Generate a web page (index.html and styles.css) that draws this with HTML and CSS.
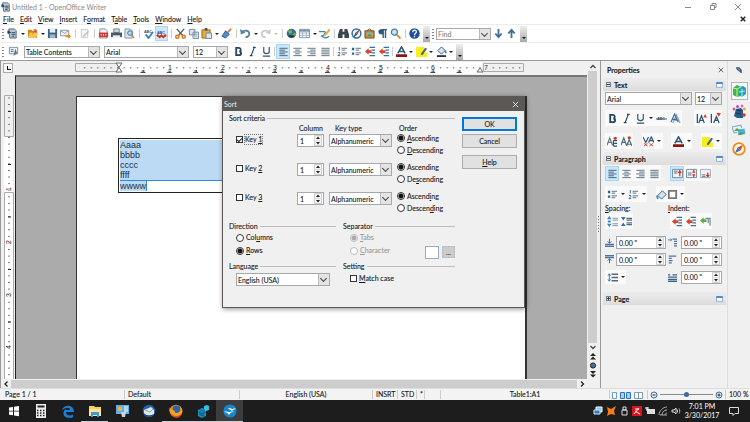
FILE: index.html
```html
<!DOCTYPE html>
<html lang="en">
<head>
<meta charset="utf-8">
<title>Untitled 1 - OpenOffice Writer</title>
<link rel="stylesheet" href="styles.css">
</head>
<body>
<svg class="defs" aria-hidden="true">
  <symbol id="doc" viewBox="0 0 12 12"><path d="M2 1h6l2 2v8H3z" fill="#b9c8d4" stroke="#4d6577"/><path d="M1 3l3 2-3 1zM5 5h4M5 7h4M5 9h3" stroke="#24475e" fill="#24475e"/></symbol>
  <symbol id="open" viewBox="0 0 12 12"><path d="M1 2h4l1 1h5v8H1z" fill="#c98a1b"/><path d="M1 11l2-6h9l-2 6z" fill="#f8c34c"/><path d="M6 6l4-4M7 2h3v3" stroke="#d5431c" fill="none"/></symbol>
  <symbol id="save" viewBox="0 0 12 12"><path d="M1 1h10v10H1z" fill="#3d6480"/><path d="M3 1h6v4H3z" fill="#e8eff4"/><path d="M3 7h6v4H3z" fill="#9fb6c6"/></symbol>
  <symbol id="mail" viewBox="0 0 12 12"><path d="M0.5 2.5h9v6h-9z" fill="#f3f5f7" stroke="#8193a0"/><path d="M1 3l4 3 4-3" fill="none" stroke="#8193a0"/><path d="M6 8h3V6l3 3-3 3v-2H6z" fill="#e98b1c"/></symbol>
  <symbol id="edit" viewBox="0 0 12 12"><path d="M2.5 1.500h7v9h-7z" fill="#f4f4f4" stroke="#c8c8c8"/><path d="M4 9l6-6 1 1-6 6z" fill="#bdbdbd"/></symbol>
  <symbol id="pdf" viewBox="0 0 12 12"><path d="M2 1h6l2 2v8H2z" fill="#e8edf0" stroke="#8494a0"/><path d="M1 5h10v5H1z" fill="#d6322c"/><path d="M3 7.500h1M5.500 7.500h1M8 7.500h1" stroke="#fff" stroke-width="2"/></symbol>
  <symbol id="print" viewBox="0 0 12 12"><path d="M3 1h6v4H3z" fill="#c9d6df" stroke="#6b7f8d"/><path d="M0 5h12v5H0z" fill="#4a5961"/><path d="M2 8h8v3H2z" fill="#eee"/></symbol>
  <symbol id="preview" viewBox="0 0 12 12"><path d="M1 1h6l2 2v8H1z" fill="#dbe5ed" stroke="#7c93a5"/><circle cx="6.500" cy="5.500" r="2.500" fill="#b9dcf6" stroke="#2d6a9c"/><path d="M8 7l3 4" stroke="#c9812a" stroke-width="1.500"/></symbol>
  <symbol id="check" viewBox="0 0 12 12"><path d="M3 7l3 4 5-7" fill="none" stroke="#3b84bd" stroke-width="2"/></symbol>
  <symbol id="auto" viewBox="0 0 12 12"><path d="M1 9l1-1 2 2 2-2 2 2 2-2 1 1" fill="none" stroke="#d92b22" stroke-width="2"/></symbol>
  <symbol id="cut" viewBox="0 0 12 12"><path d="M2 1l7 8M10 1L3 9" stroke="#51606b" stroke-width="1.500"/><circle cx="2.500" cy="9.500" r="1.700" fill="none" stroke="#e0781f" stroke-width="1.600"/><circle cx="9.500" cy="9.500" r="1.700" fill="none" stroke="#e0781f" stroke-width="1.600"/></symbol>
  <symbol id="copy" viewBox="0 0 12 12"><path d="M1.500 1.500h6v6h-6zM5.500 4.500h6v7h-6z" fill="#dce6ed" stroke="#6f8798"/><path d="M7 7h3M7 9h3" stroke="#8ca2b1"/></symbol>
  <symbol id="paste" viewBox="0 0 12 12"><path d="M1 2h9v9H1z" fill="#eaa934" stroke="#8b6a2c"/><path d="M4 0h3v3H4z" fill="#4c5c67"/><path d="M5.500 5.500h6v6h-6z" fill="#dbe6ee" stroke="#6f8798"/></symbol>
  <symbol id="brush" viewBox="0 0 12 12"><path d="M11 1L7 5" stroke="#e0781f" stroke-width="2"/><path d="M5 3l4 4-4 4-4-2z" fill="#4f8fca" stroke="#2b5f90"/></symbol>
  <symbol id="undo" viewBox="0 0 12 12"><path d="M2 5c2-3 9-3 8 2-.5 2-2 3-4 3" fill="none" stroke="currentColor" stroke-width="2"/><path d="M0 1l1 6 5-2z" fill="currentColor"/></symbol>
  <symbol id="globe" viewBox="0 0 12 12"><circle cx="6" cy="6" r="5.200" fill="#2f6f9f"/><path d="M2 3l4-1 1 3-3 2zM7 7l3-2 1 2-3 3z" fill="#76b33c"/><path d="M3 9h6" stroke="#333" stroke-width="2"/></symbol>
  <symbol id="table" viewBox="0 0 12 12"><path d="M.5 1.500h11v9H.5z" fill="#fff" stroke="#7690a2"/><path d="M1 3h10" stroke="#7690a2" stroke-width="2"/><path d="M1 5.500h10M1 8h10M4 2v8M8 2v8" stroke="#9fb2c0"/></symbol>
  <symbol id="draw" viewBox="0 0 12 12"><path d="M0 4h6c2 0 0 4-3 5 3 2 6 2 8 0" fill="none" stroke="#3b84bd" stroke-width="1.500"/><path d="M5 8l5-6 2 1-5 6z" fill="#f3ad2f"/><path d="M10 2l1-1 1 2z" fill="#d33"/></symbol>
  <symbol id="find" viewBox="0 0 12 12"><path d="M2 1h3v3h2V1h3l2 6v4H7V7H5v4H0V7z" fill="#3c4650"/></symbol>
  <symbol id="compass" viewBox="0 0 12 12"><circle cx="6" cy="6" r="4.800" fill="#f3f7fa" stroke="#2f6f9f" stroke-width="1.600"/><path d="M10 1L7 7 5 5z" fill="#e0401f"/><path d="M2 11l3-6 2 2z" fill="#2c5f8a"/></symbol>
  <symbol id="gallery" viewBox="0 0 12 12"><path d="M1 3h10v8H1z" fill="#cf8a35" stroke="#70502a"/><path d="M3 5h6v4H3z" fill="#6db6dc"/><path d="M3 9l3-3 3 3z" fill="#5a9a35"/><path d="M3 3l3-2 3 2" fill="none" stroke="#555"/></symbol>
  <symbol id="pilcrow" viewBox="0 0 12 12"><path d="M6 1h5v1.500h-1V11H8.500V2.500h-1V11H6V7C0 7 0 1 6 1z" fill="#2c5878"/></symbol>
  <symbol id="zoom" viewBox="0 0 12 12"><circle cx="4.800" cy="4.500" r="3.300" fill="#c9e4f7" stroke="#4a7da6" stroke-width="1.300"/><path d="M7.500 7.500l4 4" stroke="#d9882a" stroke-width="2"/></symbol>
  <symbol id="help" viewBox="0 0 12 12"><circle cx="6" cy="6" r="5.700" fill="#1f4f9c"/><path d="M4 4.500c0-3 4.500-2.500 4 0C7.700 6 6 6 6 7.500M6 8.500v1.500" fill="none" stroke="#fff" stroke-width="1.400"/></symbol>
  <symbol id="down" viewBox="0 0 12 12"><path d="M6 1v8M2.500 6L6 10l3.500-4" fill="none" stroke="#3f6f9a" stroke-width="2"/></symbol>
  <symbol id="up" viewBox="0 0 12 12"><path d="M6 11V3M2.500 6L6 2l3.500 4" fill="none" stroke="#3f6f9a" stroke-width="2"/></symbol>
  <symbol id="styles" viewBox="0 0 12 12"><path d="M1.500 1.500h9v7h-9z" fill="#eef2f5" stroke="#788b99"/><path d="M3 4h3M3 6h3" stroke="#567"/><path d="M8 3l-2 8 4-3z" fill="#5f7484"/></symbol>
  <symbol id="bold" viewBox="0 0 12 12"><path d="M3.500 2v8h3c3 0 3-3.800.5-4 2-.4 2-4-.5-4z" fill="none" stroke="#22475e" stroke-width="2"/></symbol>
  <symbol id="italic" viewBox="0 0 12 12"><path d="M8 1.500L4.500 10.500M6.500 1.500h3M3 10.500h3" stroke="#22475e" stroke-width="1.300"/></symbol>
  <symbol id="under" viewBox="0 0 12 12"><path d="M3 1v5c0 3 6 3 6 0V1M2 11h8" fill="none" stroke="#35566b" stroke-width="1.300"/></symbol>
  <symbol id="left" viewBox="0 0 12 12"><path d="M1.500 2.500h9M1.500 4.500h6M1.500 6.500h9M1.500 8.500h6M1.500 10.500h9" stroke="#445e70"/></symbol>
  <symbol id="center" viewBox="0 0 12 12"><path d="M1.500 2.500h9M3.500 4.500h5M1.500 6.500h9M3.500 8.500h5M1.500 10.500h9" stroke="#536a79"/></symbol>
  <symbol id="right" viewBox="0 0 12 12"><path d="M1.500 2.500h9M4.500 4.500h6M1.500 6.500h9M4.500 8.500h6M1.500 10.500h9" stroke="#536a79"/></symbol>
  <symbol id="just" viewBox="0 0 12 12"><path d="M1.500 2.500h9M1.500 4.500h9M1.500 6.500h9M1.500 8.500h9M1.500 10.500h9" stroke="#536a79"/></symbol>
  <symbol id="nums" viewBox="0 0 12 12"><path d="M2.500 1v4M1 7h2v1.500L1 10.500h2.500" fill="none" stroke="#2f6289"/><path d="M5 2.500h6M5 4.500h4M5 7.500h6M5 9.500h4" stroke="#536a79"/></symbol>
  <symbol id="bullets" viewBox="0 0 12 12"><path d="M1 2h2.500v2.500H1zM1 7h2.500v2.500H1z" fill="#2f6289"/><path d="M5 2.500h6M5 4.500h4M5 7.500h6M5 9.500h4" stroke="#536a79"/></symbol>
  <symbol id="lines" viewBox="0 0 12 12"><path d="M2.500 2v8M1 4l1.500-2L4 4M1 8l1.500 2L4 8" fill="none" stroke="#2f6fa5"/><path d="M5 2.500h7M5 6h7M5 9.500h7" stroke="#536a79" stroke-width="1.500"/></symbol>
  <symbol id="indent" viewBox="0 0 12 12"><path d="M5 1.500h6M7 4.500h4M7 7.500h4M5 10.500h6" stroke="#3f6f96" stroke-width="1.300"/><path d="M0 6l4-3.500v2h3v3H4v2z" fill="#d8452a"/></symbol>
  <symbol id="indentg" viewBox="0 0 12 12"><path d="M6 2.500h5v8M9 3v5" fill="none" stroke="#6f8798" stroke-width="1.300"/><path d="M0 5l4-3.500v2h3v3H4v2z" fill="#62a83a"/></symbol>
  <symbol id="acolor" viewBox="0 0 12 12"><path d="M2 8L6 1l4 7M3.500 6h5" fill="none" stroke="#2b5673" stroke-width="1.700"/><path d="M0 9h12v3H0z" fill="#8d1414"/></symbol>
  <symbol id="hilite" viewBox="0 0 12 12"><path d="M0 7h12v5H0zM0 1h9v6H0z" fill="#f7ee1f"/><path d="M5 9l5-7 2 1-5 7z" fill="#4d6475"/></symbol>
  <symbol id="fill" viewBox="0 0 12 12"><path d="M2 5l4-4 4 4-4 4z" fill="#d6e4ee" stroke="#365b74"/><path d="M10 5l1 3" stroke="#3f8ac4" stroke-width="2"/><path d="M1 10h10v2H1z" fill="#26343d"/></symbol>
  <symbol id="bucket" viewBox="0 0 12 12"><path d="M2 7l5-5 4 4-5 5z" fill="#d6e4ee" stroke="#365b74"/><path d="M1 7l1 4" stroke="#3f8ac4" stroke-width="2"/></symbol>
  <symbol id="strike" viewBox="0 0 12 12"><path d="M0 6.500h12" stroke="#35566b"/></symbol>
  <symbol id="shadow" viewBox="0 0 12 12"><path d="M3 11L7 2l4 9M5 8h4" fill="none" stroke="#93a9b8" stroke-width="1.500"/><path d="M1 10L5 1l4 9M3 7h4" fill="none" stroke="#39749d" stroke-width="1.300"/></symbol>
  <symbol id="grow" viewBox="0 0 12 12"><path d="M1.500 1v10M3 11l3-8 3 8M4 8h4" fill="none" stroke="#2b5673" stroke-width="1.400"/><path d="M8 5l2-4 2 4z" fill="#d33f2a"/></symbol>
  <symbol id="shrink" viewBox="0 0 12 12"><path d="M1.500 1v10M4 11l3-7 3 7M5 8h4" fill="none" stroke="#2b5673" stroke-width="1.400"/><path d="M7 0h5L9.500 4z" fill="#d33f2a"/></symbol>
  <symbol id="asub" viewBox="0 0 12 12"><path d="M0 10l3-8 3 8M1 7h4" fill="none" stroke="#64798a" stroke-width="1.300"/><path d="M7 5h4M7 8h4M7 11h4M7 5v6" fill="none" stroke="#2b5673" stroke-width="1.300"/><circle cx="9" cy="2.500" r="1.800" fill="#d33f2a"/></symbol>
  <symbol id="asup" viewBox="0 0 12 12"><path d="M0 10l3-8 3 8M1 7h4M6 11l3-7 3 7M7 9h4" fill="none" stroke="#4b6b80" stroke-width="1.300"/><circle cx="9" cy="2" r="1.800" fill="#d33f2a"/></symbol>
  <symbol id="spacing" viewBox="0 0 12 12"><path d="M0 1l3 6 3-6M6 7l3-6 3 6M7 5h4" fill="none" stroke="#2b5673" stroke-width="1.300"/><path d="M1 8l4 3M5 8l-4 3M7 8l4 3M11 8l-4 3" fill="none" stroke="#d33f2a"/></symbol>
  <symbol id="vt" viewBox="0 0 12 12"><path d="M.5 1.500h11v9H.5z" fill="#eef3f7" stroke="#6f8798"/><path d="M2 3.500h4M2 5.500h4" stroke="#536a79"/><path d="M8.500 9V4M7 5.500L8.500 3 10 5.500" stroke="#d8321f" fill="none" stroke-width="1.300"/></symbol>
  <symbol id="vm" viewBox="0 0 12 12"><path d="M.5 1.500h11v9H.5z" fill="#eef3f7" stroke="#6f8798"/><path d="M2 5.500h4M2 7.500h4" stroke="#536a79"/><path d="M8.500 2v3M8.500 7v3M7 4.500h3M7 7.500h3" stroke="#d8321f" stroke-width="1.300"/></symbol>
  <symbol id="vb" viewBox="0 0 12 12"><path d="M.5 1.500h11v9H.5z" fill="#eef3f7" stroke="#9caab4"/><path d="M2 7.500h4M2 9.500h4" stroke="#536a79"/><path d="M8.500 5v4M7 7.500L8.500 9.500 10 7.500" stroke="#d8321f" fill="none" stroke-width="1.300"/></symbol>
  <symbol id="box" viewBox="0 0 12 12"><path d="M2 2h8v8H2z" fill="#fff" stroke="#777" stroke-width="2"/></symbol>
  <symbol id="psp" viewBox="0 0 12 12"><path d="M0 3.500h5L2.500 0zM0 8.500h5L2.500 12zM1 5h3v2H1z" fill="#3b84bd"/><path d="M6 2.500h6M6 4.500h6M6 8.500h6M6 10.500h6" stroke="#7a8c99"/></symbol>
  <symbol id="psd" viewBox="0 0 12 12"><path d="M0 1h5L2.500 5zM0 11h5L2.500 7z" fill="#2f6fa5"/><path d="M6 2.500h6M6 4.500h6M6 7.500h6M6 9.500h6" stroke="#536a79" stroke-width="1.300"/></symbol>
  <symbol id="above" viewBox="0 0 12 12"><path d="M0 8.500h12M0 11h12" stroke="#4f7396" stroke-width="1.700"/><path d="M6 1v6M3.500 4.500L6 7l2.500-2.500" fill="none" stroke="#2f6fa5" stroke-width="1.300"/></symbol>
  <symbol id="below" viewBox="0 0 12 12"><path d="M0 1h12M0 3.500h12" stroke="#4f7396" stroke-width="1.700"/><path d="M6 11V5M3.500 7.500L6 5l2.500 2.500" fill="none" stroke="#2f6fa5" stroke-width="1.300"/></symbol>
  <symbol id="before" viewBox="0 0 12 12"><path d="M6 1.500h6M8 4.500h4M8 7.500h4M8 10.500h4" stroke="#4f7396" stroke-width="1.700"/><path d="M0 2.500h5M3 1l2 1.500L3 4" fill="none" stroke="#2f6fa5"/></symbol>
  <symbol id="after" viewBox="0 0 12 12"><path d="M1 1.500h10M1 4.500h4M1 7.500h5M1 10.500h4" stroke="#4f7396" stroke-width="1.700"/></symbol>
  <symbol id="first" viewBox="0 0 12 12"><path d="M0 2.500h3M6 2.500h6M0 5.500h12M0 8.500h12M0 11h12" stroke="#3f6484" stroke-width="1.700"/></symbol>
  <symbol id="more" viewBox="0 0 9 7"><path d="M.5.500h8v6h-8z" fill="#fff" stroke="#6c9bd8"/><path d="M.5 1h8" stroke="#3c74c4" stroke-width="2"/></symbol>
  <symbol id="x" viewBox="0 0 8 8"><path d="M1 1l6 6M7 1L1 7" stroke="currentColor"/></symbol>
  <symbol id="spin" viewBox="0 0 8 11"><path d="M.5.500h7v10h-7z" fill="#f4f4f4" stroke="#cfcfcf"/><path d="M0 5.500h8" stroke="#ddd"/><path d="M2 4l2-2.500L6 4zM2 7l2 2.500L6 7z" fill="#222"/></symbol>
</svg>

<header class="titlebar">
  <svg class="i"><use href="#doc"/></svg><h1>Untitled 1 - OpenOffice Writer</h1>
  <div class="winbtns">
    <button aria-label="Minimize"><svg viewBox="0 0 8 8"><path d="M1 4.500h6" stroke="#888"/></svg></button>
    <button aria-label="Restore"><svg viewBox="0 0 8 8"><path d="M1.500 2.500h4v4h-4zM3 2V.5h4v4H6" fill="none" stroke="#888"/></svg></button>
    <button aria-label="Close"><svg class="gray"><use href="#x"/></svg></button>
  </div>
</header>
<nav class="menubar">
  <a href="#"><u>F</u>ile</a><a href="#"><u>E</u>dit</a><a href="#"><u>V</u>iew</a><a href="#"><u>I</u>nsert</a><a href="#">F<u>o</u>rmat</a><a href="#">T<u>a</u>ble</a><a href="#"><u>T</u>ools</a><a href="#"><u>W</u>indow</a><a href="#"><u>H</u>elp</a>
  <button class="closedoc" aria-label="Close document"><svg><use href="#x"/></svg></button>
</nav>
<div class="toolbar">
  <i class="grip"></i>
  <button aria-label="New"><svg class="i"><use href="#doc"/></svg></button><i class="dd"></i>
  <button aria-label="Open"><svg class="i"><use href="#open"/></svg></button><i class="dd"></i>
  <button aria-label="Save"><svg class="i"><use href="#save"/></svg></button>
  <button aria-label="E-mail"><svg class="i"><use href="#mail"/></svg></button><i class="sep"></i>
  <button aria-label="Edit file"><svg class="i"><use href="#edit"/></svg></button><i class="sep"></i>
  <button aria-label="PDF"><svg class="i"><use href="#pdf"/></svg></button>
  <button aria-label="Print"><svg class="i"><use href="#print"/></svg></button>
  <button aria-label="Preview"><svg class="i"><use href="#preview"/></svg></button><i class="sep"></i>
  <button aria-label="Spelling"><svg class="i" viewBox="0 0 12 12"><use href="#check"/><text x="1" y="5" class="tiny">ABC</text></svg></button>
  <button class="on" aria-label="AutoSpellcheck"><svg class="i" viewBox="0 0 12 12"><use href="#auto"/><text x="1" y="6" class="tiny">ABC</text></svg></button><i class="sep"></i>
  <button aria-label="Cut"><svg class="i"><use href="#cut"/></svg></button>
  <button aria-label="Copy"><svg class="i"><use href="#copy"/></svg></button>
  <button aria-label="Paste"><svg class="i"><use href="#paste"/></svg></button><i class="dd"></i>
  <button aria-label="Format paintbrush"><svg class="i"><use href="#brush"/></svg></button><i class="sep"></i>
  <button aria-label="Undo"><svg class="i undo"><use href="#undo"/></svg></button><i class="dd"></i>
  <button aria-label="Redo"><svg class="i redo"><use href="#undo"/></svg></button><i class="dd off"></i><i class="sep"></i>
  <button aria-label="Hyperlink"><svg class="i"><use href="#globe"/></svg></button>
  <button aria-label="Table"><svg class="i"><use href="#table"/></svg></button><i class="dd"></i>
  <button aria-label="Draw"><svg class="i"><use href="#draw"/></svg></button><i class="sep"></i>
  <button aria-label="Find and replace"><svg class="i"><use href="#find"/></svg></button>
  <button aria-label="Navigator"><svg class="i"><use href="#compass"/></svg></button>
  <button aria-label="Gallery"><svg class="i"><use href="#gallery"/></svg></button>
  <button aria-label="Nonprinting characters"><svg class="i"><use href="#pilcrow"/></svg></button>
  <button aria-label="Zoom"><svg class="i"><use href="#zoom"/></svg></button><i class="sep"></i>
  <button aria-label="Help"><svg class="i"><use href="#help"/></svg></button>
  <i class="handle"></i><i class="grip"></i>
  <span class="combo findbox"><input type="text" placeholder="Find" aria-label="Find"></span>
  <button aria-label="Find next"><svg class="i"><use href="#down"/></svg></button>
  <button aria-label="Find previous"><svg class="i"><use href="#up"/></svg></button>
  <i class="handle"></i>
</div>
<div class="toolbar format">
  <i class="grip"></i>
  <button aria-label="Styles"><svg class="i"><use href="#styles"/></svg></button>
  <span class="combo style"><select aria-label="Apply style"><option>Table Contents</option></select></span>
  <span class="combo font"><select aria-label="Font name"><option>Arial</option></select></span>
  <span class="combo size"><select aria-label="Font size"><option>12</option></select></span>
  <button aria-label="Bold"><svg class="i"><use href="#bold"/></svg></button>
  <button aria-label="Italic"><svg class="i"><use href="#italic"/></svg></button>
  <button aria-label="Underline"><svg class="i"><use href="#under"/></svg></button><i class="sep"></i>
  <button class="on" aria-label="Left"><svg class="i"><use href="#left"/></svg></button>
  <button aria-label="Centered"><svg class="i"><use href="#center"/></svg></button>
  <button aria-label="Right"><svg class="i"><use href="#right"/></svg></button>
  <button aria-label="Justified"><svg class="i"><use href="#just"/></svg></button><i class="sep"></i>
  <button aria-label="Numbering"><svg class="i"><use href="#nums"/></svg></button>
  <button aria-label="Bullets"><svg class="i"><use href="#bullets"/></svg></button>
  <button aria-label="Decrease indent"><svg class="i"><use href="#indent"/></svg></button>
  <button aria-label="Increase indent"><svg class="i"><use href="#indent"/></svg></button><i class="sep"></i>
  <button aria-label="Font color"><svg class="i"><use href="#acolor"/></svg></button><i class="dd"></i>
  <button aria-label="Highlighting"><svg class="i"><use href="#hilite"/></svg></button><i class="dd"></i>
  <button aria-label="Background color"><svg class="i"><use href="#fill"/></svg></button><i class="dd"></i>
  <i class="handle"></i>
</div>

<main class="workspace">
  <section class="editor">
    <div class="view">
      <div class="sheetarea">
        <div class="hruler">
          <span class="corner"></span>
          <svg viewBox="0 0 571 14" width="571" height="14">
            <defs><pattern id="dots" width="6.590" height="14" patternUnits="userSpaceOnUse" x="102"><path d="M0 6h1.200v1.400H0z" fill="#777"/></pattern>
            <pattern id="tabs" width="26.350" height="14" patternUnits="userSpaceOnUse" x="102"><path d="M23.500 11.500h4M25.500 9v3M0 11.500h2M.5 9v3" stroke="#444"/></pattern></defs>
            <path d="M104 1h363v12H104z" fill="#fff"/>
            <path d="M60.500 2.500h43v8h-43zM468.500 2.500h40v8h-40z" fill="#f0f0f0" stroke="#aaa"/>
            <path d="M64 0h442v14H64z" fill="url(#dots)"/><path d="M115 0h350v14H115z" fill="url(#tabs)"/>
            <path d="M101 2h6l-3 4.500zM104 6.500l3 4.500h-6zM462 11l3-4 3 4z" fill="#fff" stroke="#666"/>
            <g class="nums"><text x="155" y="9">1</text><text x="208" y="9">2</text><text x="260" y="9">3</text><text x="313" y="9">4</text><text x="366" y="9">5</text><text x="418" y="9">6</text><text x="471" y="9">7</text></g>
          </svg>
        </div>
        <div class="docrow">
          <div class="vruler">
            <svg viewBox="0 0 15 304" width="15" height="304">
              <defs><pattern id="vdots" width="15" height="6.590" patternUnits="userSpaceOnUse" y="62"><path d="M7 0h2v1H7z" fill="#777"/></pattern></defs>
              <path d="M3 62h9v55H3z" fill="#fff"/>
              <path d="M3.500 20.500h9v41h-9z" fill="#f0f0f0" stroke="#aaa"/><path d="M3.500 117.500h9v190h-9z" fill="#fff" stroke="#aaa"/>
              <path d="M4 22h8v282H4z" fill="url(#vdots)"/><path d="M7 36.500h3M7 89.500h3M7 142h3M7 194.500h3M7 247h3" stroke="#222"/>
              <g class="nums"><text transform="translate(10 116) rotate(-90)" x="0" y="0">1</text><text transform="translate(10 169) rotate(-90)" x="0" y="0">2</text><text transform="translate(10 222) rotate(-90)" x="0" y="0">3</text><text transform="translate(10 274) rotate(-90)" x="0" y="0">4</text></g>
            </svg>
          </div>
          <div class="canvas"><article class="page">
            <table class="doctable"><tbody><tr><td><p>Aaaa</p><p>bbbb</p><p>cccc</p><p>ffff</p><p class="last"><mark>wwww</mark></p></td></tr></tbody></table>
          </article></div>
        </div>
      </div>
      <div class="vscroll">
        <svg viewBox="0 0 10 8"><path d="M2.500 5.500L5 3l2.500 2.500" fill="none" stroke="#444" stroke-width="1.300"/></svg>
        <span class="thumb"></span>
        <svg viewBox="0 0 10 8"><path d="M2.500 2.500L5 5l2.500-2.500" fill="none" stroke="#444" stroke-width="1.300"/></svg>
        <svg viewBox="0 0 10 9"><path d="M2 4l3-3 3 3zM2 7.500l3-3 3 3z" fill="#222"/></svg>
        <svg viewBox="0 0 10 9"><circle cx="5" cy="4.500" r="2.600" fill="#4a6f94" stroke="#223"/></svg>
        <svg viewBox="0 0 10 9"><path d="M2 1l3 3 3-3zM2 4.500l3 3 3-3z" fill="#222"/></svg>
      </div>
    </div>
    <div class="hscroll">
      <svg viewBox="0 0 10 8"><path d="M6.500 1.500L4 4l2.500 2.500" fill="none" stroke="#222" stroke-width="1.300"/></svg>
      <span class="thumb"></span>
      <svg viewBox="0 0 10 8"><path d="M4 1.500L6.500 4 4 6.500" fill="none" stroke="#222" stroke-width="1.300"/></svg>
    </div>
  </section>
  <div class="splitter"><i></i></div>
  <aside class="sidebar">
    <div class="panelhead"><h2>Properties</h2><button aria-label="Close sidebar"><svg class="xs"><use href="#x"/></svg></button></div>
    <div class="sechead"><i class="tw"></i><h3>Text</h3><button aria-label="Character options"><svg class="more"><use href="#more"/></svg></button></div>
    <div class="section">
      <div class="row"><span class="combo sfont"><select aria-label="Font"><option>Arial</option></select></span><span class="combo ssize"><select aria-label="Size"><option>12</option></select></span></div>
      <div class="row spread"><span class="grp"><button aria-label="Bold"><svg class="i"><use href="#bold"/></svg></button><button aria-label="Italic"><svg class="i"><use href="#italic"/></svg></button><button aria-label="Underline"><svg class="i"><use href="#under"/></svg></button><i class="dd"></i><button aria-label="Strikethrough"><svg class="i" viewBox="0 0 12 12"><text x="1" y="8" class="tiny">ABC</text><use href="#strike"/></svg></button><button aria-label="Shadow"><svg class="i"><use href="#shadow"/></svg></button></span><span class="grp"><button aria-label="Grow"><svg class="i"><use href="#grow"/></svg></button><button aria-label="Shrink"><svg class="i"><use href="#shrink"/></svg></button></span></div>
      <div class="row spread"><span class="grp"><button aria-label="Subscript"><svg class="i"><use href="#asub"/></svg></button><button aria-label="Superscript"><svg class="i"><use href="#asup"/></svg></button></span><span class="grp"><button aria-label="Character spacing"><svg class="i"><use href="#spacing"/></svg></button><i class="dd"></i></span><span class="grp"><button aria-label="Font color"><svg class="i"><use href="#acolor"/></svg></button><i class="dd"></i></span><span class="grp"><button aria-label="Highlighting"><svg class="i"><use href="#hilite"/></svg></button><i class="dd"></i></span></div>
    </div>
    <div class="sechead"><i class="tw"></i><h3>Paragraph</h3><button aria-label="Paragraph options"><svg class="more"><use href="#more"/></svg></button></div>
    <div class="section para">
      <div class="row two"><span class="grp"><button class="on" aria-label="Left"><svg class="i"><use href="#left"/></svg></button><button aria-label="Center"><svg class="i"><use href="#center"/></svg></button><button aria-label="Right"><svg class="i"><use href="#right"/></svg></button><button aria-label="Justify"><svg class="i"><use href="#just"/></svg></button></span><span class="grp"><button class="on" aria-label="Top"><svg class="i"><use href="#vt"/></svg></button><button aria-label="Middle"><svg class="i"><use href="#vm"/></svg></button><button aria-label="Bottom"><svg class="i"><use href="#vb"/></svg></button></span></div>
      <div class="row two lists"><span class="grp"><button aria-label="Bullets"><svg class="i"><use href="#bullets"/></svg></button><i class="dd"></i><button aria-label="Numbering"><svg class="i"><use href="#nums"/></svg></button><i class="dd"></i></span><span class="grp"><button aria-label="Fill"><svg class="i"><use href="#bucket"/></svg><svg class="i"><use href="#box"/></svg></button><i class="dd"></i></span></div>
      <div class="labels"><span><u>S</u>pacing:</span><span><u>I</u>ndent:</span></div>
      <div class="row two"><span class="grp"><button aria-label="Increase spacing"><svg class="i"><use href="#psp"/></svg></button><button aria-label="Decrease spacing"><svg class="i"><use href="#psd"/></svg></button></span><span class="grp"><button aria-label="Decrease indent"><svg class="i"><use href="#indent"/></svg></button><button aria-label="Increase indent"><svg class="i"><use href="#indent"/></svg></button><button aria-label="Hanging indent"><svg class="i"><use href="#indentg"/></svg></button></span></div>
      <div class="fields">
        <svg class="f"><use href="#above"/></svg><span class="spin"><input value='0.00 "' aria-label="Above paragraph spacing"><svg><use href="#spin"/></svg></span>
        <svg class="f"><use href="#before"/></svg><span class="spin"><input value='0.00 "' aria-label="Before text indent"><svg><use href="#spin"/></svg></span>
        <svg class="f"><use href="#below"/></svg><span class="spin"><input value='0.00 "' aria-label="Below paragraph spacing"><svg><use href="#spin"/></svg></span>
        <svg class="f"><use href="#after"/></svg><span class="spin"><input value='0.00 "' aria-label="After text indent"><svg><use href="#spin"/></svg></span>
        <span class="grp line"><button aria-label="Line spacing"><svg class="i"><use href="#lines"/></svg></button><i class="dd"></i></span>
        <svg class="f"><use href="#first"/></svg><span class="spin"><input value='0.00 "' aria-label="First line indent"><svg><use href="#spin"/></svg></span>
      </div>
    </div>
    <div class="sechead pagehead"><i class="tw plus"></i><h3>Page</h3><button aria-label="Page options"><svg class="more"><use href="#more"/></svg></button></div>
  </aside>
  <div class="decks">
    <button aria-label="Sidebar settings"><svg viewBox="0 0 14 14"><path d="M4 5h3l2 2v3M5 6l4 3" stroke="#3f5c78" fill="none" stroke-width="1.500"/></svg></button>
    <button class="cur" aria-label="Properties"><svg viewBox="0 0 14 14"><path d="M1 4l4-3 4 2v9l-4 1-4-2z" fill="#39b54a"/><path d="M7 3l4-1 3 2v6l-4 3-3-2z" fill="#1e9be0"/><path d="M1 4l4 1 4-2M5 5v8M7 8l6-1M10 5v8" stroke="#c9f1a6" fill="none"/></svg></button>
    <button aria-label="Styles"><svg viewBox="0 0 14 14"><path d="M4 5l5-1 2 2v8H5L2 12z" fill="#1f5c94"/><path d="M5 6l4 1M4 9l5 1" stroke="#3b2b24"/><circle cx="2" cy="5" r="1.500" fill="#e0569c"/><circle cx="5.500" cy="2.500" r="1.500" fill="#b153b8"/><circle cx="10" cy="2" r="1.500" fill="#e86ab0"/><circle cx="12.500" cy="5" r="1.400" fill="#f0a52b"/><circle cx="12" cy="11" r="1.700" fill="#d3332a"/></svg></button>
    <button aria-label="Gallery"><svg viewBox="0 0 14 14"><path d="M0 4l9-2 1 6-8 2z" fill="#e3f1f8" stroke="#7fa9c0"/><path d="M5 6l8-1 1 6-8 2z" fill="#59abd9" stroke="#e8f3f9"/><path d="M2 8l3-3 3 3z" fill="#58a93c"/><path d="M6 12l3-3 4 2z" fill="#4f9f37"/></svg></button>
    <button aria-label="Navigator"><svg viewBox="0 0 14 14"><circle cx="7" cy="7" r="5.800" fill="#fff7e8" stroke="#ee8b1c" stroke-width="1.800"/><path d="M11 3L8.500 8.500 5.500 5.500z" fill="#d9422a"/><path d="M3 11l2.500-5.500 3 3z" fill="#3f78b0"/></svg></button>
  </div>
</main>

<footer class="status">
  <span>Page 1 / 1</span><span>Default</span><span class="mid">English (USA)</span><span>INSRT</span><span>STD</span><span>*</span><span></span><span class="mid">Table1:A1</span>
  <span class="views"><svg viewBox="0 0 34 10"><path d="M2.500 2.500h4v6h-4z" fill="#fff" stroke="#6e9cc8"/><path d="M10.500 2.500h4v6h-4zM16.500 2.500h4v6h-4z" fill="#a9cff0" stroke="#2c74b9"/><path d="M24.500 2.500h4v6h-4zM28.500 2.500h4v6h-4z" fill="#fff" stroke="#7d9ab3"/></svg></span>
  <span class="zoomer"><svg class="z" viewBox="0 0 8 8"><circle cx="4" cy="4" r="3" fill="#e3eefa" stroke="#3d6c99"/><path d="M2.500 4h3" stroke="#234"/></svg><input type="range" min="0" max="100" value="50" aria-label="Zoom"><svg class="z" viewBox="0 0 8 8"><circle cx="4" cy="4" r="3" fill="#e3eefa" stroke="#3d6c99"/><path d="M2.500 4h3M4 2.500v3" stroke="#234"/></svg></span>
  <span>100 %</span>
</footer>

<nav class="taskbar">
  <button aria-label="Start"><svg viewBox="0 0 14 14"><path d="M2 3.500l4-.6v3.800H2zM7 2.700l5-.7v4.700H7zM2 7.500h4v3.800l-4-.6zM7 7.500h5v4.700l-5-.7z" fill="#fff"/></svg></button>
  <button aria-label="Calculator"><svg viewBox="0 0 14 14"><path d="M2 0h10v14H2z" fill="#eee"/><path d="M3.500 1.500h7v2h-7z" fill="#222"/><path d="M3 6.500h8M3 9h8M3 11.500h8" stroke="#222" stroke-width="1.500" stroke-dasharray="1.500 1.500"/></svg></button>
  <button aria-label="Edge"><svg viewBox="0 0 14 14"><path d="M1 6.500C2 0 13 0 13 8H5c0 4 4 4 7 2.500v2.700C6 15 2 12.500 2.500 8.500 3 6 5 5 5.500 4.800 4.800 5.500 5 6 5 6h4C9 3 4 3 1 6.500z" fill="#1783d8"/></svg></button>
  <button class="run" aria-label="File Explorer"><svg viewBox="0 0 14 14"><path d="M1 2h5l1 1h6v9H1z" fill="#f5cf63"/><path d="M1 5h12v7H1z" fill="#fbe59a"/><path d="M3 8h8v5H9v-2H5v2H3z" fill="#3a9bdc"/></svg></button>
  <button aria-label="Control Panel"><svg viewBox="0 0 14 14"><path d="M1 1h13v9H1z" fill="#5db0e8"/><circle cx="5" cy="5" r="2.300" fill="#f4b53b"/><path d="M9 3h4M9 5h4M9 7h4" stroke="#fff"/><path d="M6 8h5l-1 5H7z" fill="#c9d4dc"/></svg></button>
  <button aria-label="Thunderbird"><svg viewBox="0 0 14 14"><circle cx="7" cy="7" r="6.300" fill="#2660a8"/><path d="M2 6l7-3 3 3v4c-4 3-8 2-10-1z" fill="#dfe8f1"/><path d="M3 6l5 2 3-3" fill="none" stroke="#8aa"/><path d="M1 9c2 4 8 5 11 1-3 2-8 2-11-1z" fill="#16407c"/></svg></button>
  <button class="run" aria-label="Firefox"><svg viewBox="0 0 14 14"><circle cx="7" cy="7" r="6.300" fill="#f08a1d"/><circle cx="7.500" cy="5.500" r="3.900" fill="#2765b0"/><path d="M1 3c0 2 1 3 3 3l2 1c-1 2 2 3 4 1 2 0 2-4 1-5 3 2 3 6 1 8-3 3-8 2-10-1-2-2-2-5-1-7z" fill="#f6a21c"/><path d="M2 9c2 4 8 4 11 0-1 6-9 7-11 0z" fill="#db4a1b"/></svg></button>
  <button class="run" aria-label="Registry"><svg viewBox="0 0 14 14"><path d="M2 6l4-2 4 2v6l-4 2-4-2z" fill="#1d9fd0"/><path d="M8 2l3-1 2 1v4l-3 1-2-1z" fill="#35c0ea"/><path d="M2 8l4 2 4-2M6 5v9M3 10l7 3M4 5v7M8 5v7" stroke="#0a4866" fill="none" stroke-width=".7"/></svg></button>
  <button class="run active" aria-label="OpenOffice"><svg viewBox="0 0 14 14"><circle cx="7" cy="7" r="6.600" fill="#1785cc"/><path d="M5 5c2-2 3 0 4 0s2-1 4 0c-2 0-3 1-4 2-1-1-2-2-4-2zM1 8c2-1 4 0 5 0s3-1 5 0c-3 0-4 1-5 3-1-2-3-3-5-3z" fill="#fff"/></svg></button>
  <div class="tray">
    <svg viewBox="0 0 10 10"><path d="M3 1h6v5H3z" fill="#8cc4f0" stroke="#fff"/><path d="M1 4h6v4H1z" fill="#2f78c4" stroke="#d5e8f8"/></svg>
    <svg viewBox="0 0 10 10"><path d="M1 1l4 2 5-3-2 5 1 4-4-1-4 2 1-4z" fill="#f57d17"/></svg>
    <svg viewBox="0 0 10 10"><path d="M4 1h3v3H4zM3 4h5v5H3z" fill="none" stroke="#ddd"/></svg>
    <svg viewBox="0 0 10 10"><path d="M0 0h10v10H0z" fill="#d8151d"/><path d="M2 8l5-6M3 3h4M3 5l5 3" stroke="#fff"/></svg>
    <svg viewBox="0 0 10 10"><path d="M2 3h8v5H2z" fill="#ddd"/><path d="M0 2h4M1 4h3M2 1v3" stroke="#fff"/></svg>
    <svg viewBox="0 0 10 10"><path d="M1 9C1 5 5 1 9 1M4 9c0-3 2-5 5-5M7 9c0-1 1-2 2-2M2 9h7" fill="none" stroke="#aaa"/></svg>
    <svg viewBox="0 0 10 10"><path d="M1 4h2l2-2v6L3 6H1z" fill="none" stroke="#ddd"/><path d="M6.500 3.500v3M8 2.500c1 1 1 4 0 5" fill="none" stroke="#bbb"/></svg>
    <time>7:01 PM<br>3/30/2017</time>
    <svg class="note" viewBox="0 0 12 12"><path d="M1.500 2.500h9v6H7l-2 2v-2H1.500z" fill="none" stroke="#ddd"/></svg>
  </div>
</nav>

<form class="dialog" role="dialog" aria-label="Sort">
  <div class="dtitle"><span>Sort</span><button type="button" aria-label="Close"><svg><use href="#x"/></svg></button></div>
  <div class="dbody">
    <div class="dmain">
      <div class="gtitle">Sort criteria</div>
      <div class="criteria">
        <span></span><span class="ch">Column</span><span class="kt">Key type</span><span class="ch">Order</span>
        <label class="focus"><input type="checkbox" checked><b>Key <u>1</u></b></label>
        <span class="spin"><input value="1" aria-label="Column 1"><svg><use href="#spin"/></svg></span>
        <span class="combo"><select aria-label="Key type 1"><option>Alphanumeric</option></select></span>
        <span class="order"><label><input type="radio" name="o1" checked><b><u>A</u>scending</b></label><label><input type="radio" name="o1"><b><u>D</u>escending</b></label></span>
        <label><input type="checkbox"><b>Key <u>2</u></b></label>
        <span class="spin"><input value="1" aria-label="Column 2"><svg><use href="#spin"/></svg></span>
        <span class="combo"><select aria-label="Key type 2"><option>Alphanumeric</option></select></span>
        <span class="order"><label><input type="radio" name="o2" checked><b>Ascending</b></label><label><input type="radio" name="o2"><b>De<u>s</u>cending</b></label></span>
        <label><input type="checkbox"><b>Key <u>3</u></b></label>
        <span class="spin"><input value="1" aria-label="Column 3"><svg><use href="#spin"/></svg></span>
        <span class="combo"><select aria-label="Key type 3"><option>Alphanumeric</option></select></span>
        <span class="order"><label><input type="radio" name="o3" checked><b>Ascend<u>i</u>ng</b></label><label><input type="radio" name="o3"><b>Descen<u>d</u>ing</b></label></span>
      </div>
      <div class="pair">
        <div>
          <div class="gtitle">Direction</div>
          <div class="opts"><label><input type="radio" name="dir"><b>Col<u>u</u>mns</b></label><label><input type="radio" name="dir" checked><b><u>R</u>ows</b></label></div>
          <div class="gtitle">Language</div>
          <div class="opts"><span class="combo lang"><select aria-label="Language"><option>English (USA)</option></select></span></div>
        </div>
        <div>
          <div class="gtitle">Separator</div>
          <div class="opts"><label class="dis"><input type="radio" name="sp" checked disabled><b><u>T</u>abs</b></label>
          <div class="charrow"><label class="dis"><input type="radio" name="sp" disabled><b><u>C</u>haracter</b></label><input class="char" type="text" aria-label="Separator character"><button type="button" class="dots" disabled>...</button></div></div>
          <div class="gtitle">Setting</div>
          <div class="opts"><label class="match"><input type="checkbox"><b><u>M</u>atch case</b></label></div>
        </div>
      </div>
    </div>
    <div class="dbtns"><button type="button" class="def">OK</button><button type="button">Cancel</button><button type="button" class="helpb"><span><u>H</u>elp</span></button></div>
  </div>
</form>
</body>
</html>
```
FILE: styles.css
```css
* { box-sizing: border-box; }
body { margin: 0; height: 100vh; display: flex; flex-direction: column; overflow: hidden; background: #fff; color: #1a1a1a; font: 7px/10px Lato, "Open Sans", sans-serif; -webkit-text-stroke: 0.1px; }
button, input, select { font: inherit; color: inherit; margin: 0; padding: 0; border: 0; background: none; border-radius: 0; outline: 0; }
button { display: flex; align-items: center; justify-content: center; }
h1, h2, h3, p { margin: 0; font-size: inherit; font-weight: inherit; }
b { font-weight: inherit; }
a { color: inherit; text-decoration: none; }
u { text-underline-offset: 1px; text-decoration-thickness: 1px; }
svg { display: block; flex: none; }
.defs { position: absolute; width: 0; height: 0; }
.tiny { font: bold 4px "Liberation Sans", sans-serif; fill: #23506f; }
.i { width: 11px; height: 11px; }

.titlebar { height: 13px; flex: none; display: flex; align-items: center; padding-left: 1px; gap: 1px; color: #888; -webkit-text-stroke: 0; }
.titlebar .i { width: 10px; height: 10px; }
.winbtns { margin-left: auto; display: flex; }
.winbtns button { width: 25px; height: 12px; }
.winbtns svg { width: 8px; height: 8px; }
.gray { color: #888; }
.menubar { height: 12px; flex: none; display: flex; align-items: center; gap: 6px; padding: 0 3px; border-bottom: 1px solid #ececec; }
.closedoc { margin-left: auto; width: 8px; }
.closedoc svg { width: 6px; height: 6px; stroke-width: 2px; color: #223; }

.toolbar { height: 17px; flex: none; display: flex; align-items: center; }
.toolbar button { width: 13px; height: 15px; flex: none; }
.toolbar .on, .grp .on { background: #cce8ff; box-shadow: inset 0 0 0 1px #a6d4f7; }
.grip { width: 6px; height: 11px; flex: none; background: radial-gradient(circle, #888 30%, transparent 50%) 2px 0 / 2px 3px repeat-y; }
.sep { width: 6px; height: 9px; flex: none; background: linear-gradient(#ccc, #ccc) center / 1px 100% no-repeat; }
.dd { width: 7px; height: 10px; flex: none; display: flex; align-items: center; justify-content: center; }
.dd::before { content: ""; border: 2px solid transparent; border-top-color: #222; border-bottom: 0; }
.dd.off::before { border-top-color: #bbb; }
.undo { color: #55809f; }
.redo { color: #ccc; transform: scaleX(-1); }
.handle { width: 7px; height: 16px; flex: none; margin-left: 2px; background: linear-gradient(#eee, #aaa); display: flex; align-items: flex-end; justify-content: center; padding-bottom: 3px; }
.handle::before { content: ""; border: 2px solid transparent; border-top-color: #111; border-bottom: 0; }
.format button { width: 14px; }
.format .sep { width: 3px; }
.format .dd { width: 6px; }
.toolbar.format { border-top: 1px solid #ececec; height: 18px; }

.combo { position: relative; display: flex; height: 12px; border: 1px solid #a5a8ad; background: #fff; }
.combo select, .combo input { appearance: none; width: 100%; min-width: 0; padding: 0 11px 0 1px; line-height: 10px; }
.combo::before { content: ""; position: absolute; right: 0; top: 0; bottom: 0; width: 10px; background: #e4e4e4; border-left: 1px solid #b9b9b9; pointer-events: none; }
.combo::after { content: ""; position: absolute; right: 3px; top: 2px; width: 4px; height: 4px; border: solid #444; border-width: 0 1px 1px 0; transform: rotate(45deg); pointer-events: none; }
.findbox { width: 55px; margin-right: 1px; }
.findbox input::placeholder { color: #888; }
.combo.style { width: 76px; margin: 0 4px; }
.combo.font { width: 85px; margin-right: 4px; }
.combo.size { width: 35px; margin-right: 3px; }

.workspace { flex: 1; min-height: 0; display: flex; border-top: 1px solid #999; background: #f0f0f0; }
.editor { flex: 1; min-width: 0; display: flex; flex-direction: column; border-left: 1px solid #999; }
.view { flex: 1; min-height: 0; display: flex; }
.sheetarea { flex: 1; min-width: 0; display: flex; flex-direction: column; overflow: hidden; }
.hruler { height: 14px; flex: none; display: flex; }
.corner { width: 10px; height: 10px; margin: 2px 2px 0; flex: none; border: 1px solid #aaa; background: linear-gradient(#111, #111) 3px 5px / 4px 1px no-repeat, linear-gradient(#111, #111) 3px 2px / 1px 4px no-repeat #f6f6f6; }
.nums { font: 7px "Liberation Sans", sans-serif; fill: #222; text-anchor: middle; stroke: #fff; stroke-width: 1px; paint-order: stroke; }
.vruler .nums { text-anchor: start; }
.docrow { flex: 1; min-height: 0; display: flex; }
.vruler { width: 14px; flex: none; overflow: hidden; }
.canvas { flex: 1; min-width: 0; display: flex; background: #ababab; border-left: 1px solid #222; border-top: 2px solid #777; padding: 19px 60px 0; overflow: hidden; }
.page { flex: 1; background: #fff; border: solid #333; border-width: 1px 2px 0 1px; padding: 41px 41px; }
.doctable { width: 100%; border-collapse: collapse; }
.doctable td { border: 1px solid #222; padding: 1px; font: 9px/10px "Liberation Sans", Arial, sans-serif; -webkit-text-stroke: 0; color: #1b3048; }
.doctable p { background: #bcdaf3; }
.doctable p.last { background: #fff; border-top: 1px solid #2d8ae0; }
mark { display: inline-block; background: #bcdaf3; color: inherit; border-right: 1px solid #2d8ae0; }
.vscroll { width: 11px; flex: none; display: flex; flex-direction: column; align-items: center; background: #f0f0f0; padding-top: 1px; }
.vscroll svg { width: 10px; height: 9px; }
.vscroll .thumb { width: 9px; flex: 1; background: #cdcdcd; }
.hscroll { height: 9px; flex: none; display: flex; align-items: center; padding-right: 11px; }
.hscroll svg { width: 10px; height: 8px; }
.hscroll .thumb { flex: 1; height: 8px; background: #cdcdcd; }
.splitter { width: 3px; flex: none; display: flex; align-items: center; border-right: 1px solid #999; }
.splitter i { width: 1px; height: 18px; background: repeating-linear-gradient(#777 0 1px, transparent 1px 3px); }

.sidebar { width: 127px; flex: none; padding: 1px 1px 0 2px; border-right: 1px solid #ddd; }
.panelhead, .sechead { display: flex; align-items: center; font-weight: 700; }
.panelhead { height: 16px; padding: 0 2px 0 4px; }
.panelhead button, .sechead button { margin-left: auto; }
.xs { width: 6px; height: 6px; color: #345; }
.sechead { height: 13px; padding: 0 3px; background: linear-gradient(#ececec, #dcdcdc); }
.tw { width: 5px; height: 5px; margin-right: 3px; border: 1px solid #6f8190; background: linear-gradient(#345, #345) center / 3px 1px no-repeat; }
.tw.plus { background: linear-gradient(#345, #345) center / 3px 1px no-repeat, linear-gradient(#345, #345) center / 1px 3px no-repeat; }
.more { width: 7px; height: 6px; }
.section { padding: 1px 4px 3px 2px; }
.row { display: flex; margin-bottom: 7px; height: 16px; }
.row:first-child { margin-bottom: 2px; }
.section > .row:last-child { margin-bottom: 0; }
.spread { justify-content: space-between; }
.combo.sfont { width: 87px; height: 13px; margin-right: 3px; }
.combo.ssize { flex: 1; height: 13px; }
.grp { display: flex; align-items: center; height: 16px; background: #fafafa; }
.grp button { width: 14px; height: 15px; }
.section.para { padding-top: 0; padding-bottom: 8px; }
.para .row:first-child { margin-bottom: 5px; }
.two { display: grid; grid-template-columns: 65px 1fr; }
.two .grp { justify-self: start; }
.lists { grid-template-columns: 51px 1fr; margin-bottom: 1px; }
.lists .grp:last-child button { width: 22px; }
.labels { display: grid; grid-template-columns: 63px 1fr; height: 10px; }
.fields { display: grid; grid-template-columns: 9px 50px 11px 1fr; gap: 4px 2px; align-items: center; }
.row + .fields { margin-top: 0; }
.f { width: 9px; height: 9px; }
.line { grid-column: span 2; justify-self: start; height: 14px; }
.spin { display: flex; align-items: center; height: 13px; padding-right: 1px; background: #fff; border: 1px solid #a5a8ad; }
.spin input { flex: 1; width: 0; min-width: 0; padding-left: 2px; }
.spin svg { width: 8px; height: 11px; }
.decks { width: 22px; flex: none; display: flex; flex-direction: column; align-items: center; gap: 2px; }
.decks button { width: 17px; height: 17px; }
.decks svg { width: 14px; height: 14px; }
.decks .cur { border: 1px solid #b5b5b5; background: #fafafa; height: 18px; margin-top: 2px; }

.status { height: 12px; flex: none; display: grid; grid-template-columns: 124fr 115fr 133fr 25px 19px 8px 16px 169fr 38px 78px 25px; align-items: center; background: #f3f3f3; border-top: 1px solid #ddd; }
.status span { border-left: 1px solid #ccc; padding-left: 3px; height: 9px; line-height: 9px; white-space: nowrap; }
.status span:first-child { border: 0; padding-left: 5px; }
.status .mid { text-align: center; padding: 0; }
.status .views { padding: 0; }
.views svg { width: 34px; height: 10px; }
.status .zoomer { display: flex; align-items: center; gap: 2px; padding: 0 2px; }
.z { width: 8px; height: 8px; }
.zoomer input { appearance: none; flex: 1; min-width: 0; height: 8px; background: linear-gradient(#888, #888) center / 100% 1px no-repeat; }
.zoomer input::-webkit-slider-thumb { appearance: none; width: 5px; height: 5px; border-radius: 50%; background: #3d6c99; }

.taskbar { height: 22px; flex: none; display: flex; background: #1d1d1d; color: #fff; }
.taskbar button { width: 27px; height: 22px; border-bottom: 1px solid transparent; }
.taskbar button svg { width: 14px; height: 14px; }
.taskbar .run { border-bottom: 1px solid #c8d0d6; }
.taskbar .active { background: #3d3d3d; }
.tray { margin-left: auto; display: flex; align-items: center; gap: 3px; padding-right: 10px; -webkit-text-stroke: 0; }
.tray svg { width: 10px; height: 10px; }
.tray time { width: 36px; text-align: center; line-height: 9px; }
.tray svg.note { width: 12px; height: 12px; margin-left: 5px; }

.dialog { position: absolute; left: 222px; top: 96px; width: 303px; background: #f0f0f0; border: 1px solid #5c5855; box-shadow: 1px 1px 5px rgba(0, 0, 0, 0.45); }
.dtitle { height: 14px; display: flex; align-items: center; justify-content: space-between; background: #5c5855; color: #eee; padding: 0 5px 0 1px; -webkit-text-stroke: 0; }
.dtitle svg { width: 7px; height: 7px; }
.dbody { display: flex; padding: 2px 7px 4px 6px; }
.dmain { width: 226px; }
.gtitle { display: flex; align-items: center; gap: 2px; height: 10px; }
.gtitle::after { content: ""; flex: 1; border-top: 1px solid #bbb; }
.criteria { display: grid; grid-template-columns: 56px 27px 63px 1fr; column-gap: 5px; grid-template-rows: 9px; grid-auto-rows: 29px; padding-left: 7px; }
.criteria .kt { padding-left: 6px; }
.criteria .ch { padding-left: 2px; }
.criteria > label, .criteria > .spin, .criteria > .combo { margin-top: 2px; height: 13px; }
.criteria > label { height: 11px; }
.criteria > .focus b { outline: 1px dotted #777; }
.dialog label { display: flex; align-items: center; gap: 2px; }
.dialog label b { line-height: 9px; }
.order label { height: 12px; }
input[type="checkbox"] { appearance: none; width: 7px; height: 7px; border: 1px solid #333; background: #fff; display: flex; }
input[type="checkbox"]:checked::before { content: ""; margin: 0 1px; width: 3px; height: 4px; border: solid #222; border-width: 0 1px 1px 0; transform: rotate(45deg); }
input[type="radio"] { appearance: none; width: 8px; height: 8px; border: 1px solid #333; border-radius: 50%; background: #fff; }
input[type="radio"]:checked { background: radial-gradient(circle, #111 0 2px, #fff 3px); }
.pair { display: grid; grid-template-columns: 107px 1fr; gap: 7px; padding-top: 2px; }
.opts { padding-left: 7px; height: 30px; }
.opts > label { height: 13px; }
.dialog .dis { color: #999; }
.dialog .dis input { border-color: #bbb; }
.dialog .dis input:checked { background: radial-gradient(circle, #aaa 0 2px, #fff 3px); }
.charrow { display: flex; align-items: center; height: 13px; }
.char { width: 14px; height: 13px; margin: 3px 3px 0 auto; border: 1px solid #9cabc4; background: #fff; }
.dots { width: 13px; height: 12px; margin-top: 3px; background: #ccc; border: 1px solid #bfbfbf; color: #333; }
.combo.lang { width: 94px; height: 13px; margin-top: 2px; }
.opts > .match { height: 14px; }
.dbtns { flex: 1; margin-left: 7px; display: flex; flex-direction: column; gap: 3px; padding-top: 4px; }
.dbtns button { height: 14px; background: #e1e1e1; border: 1px solid #adadad; }
.dbtns .def { border: 1px solid #0078d7; box-shadow: inset 0 0 0 1px #0078d7; }
.dbtns .helpb { margin-top: 4px; }
```
